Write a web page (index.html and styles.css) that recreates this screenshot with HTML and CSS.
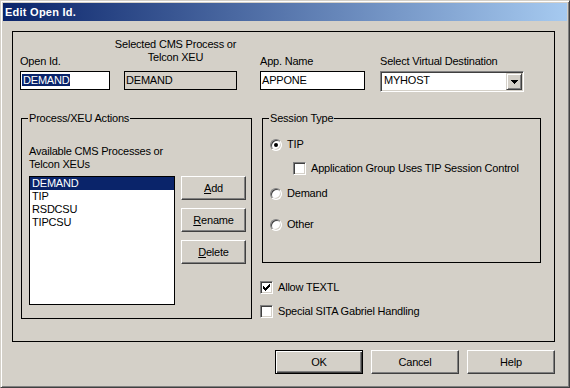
FILE: index.html
```html
<!DOCTYPE html>
<html lang="en">
<head>
    <meta charset="UTF-8">
    <title>Edit Open Id.</title>
    <link rel="stylesheet" href="styles.css">
</head>
<body>

    <div class="window">
        <div class="titlebar">Edit Open Id.</div>

        <div class="dialog">
            <div class="frame">

                <div class="top-row">
                    <div class="field">
                        <div class="field-label">Open Id.</div>
                        <div class="textbox open-id"><span class="selected-text">DEMAND</span></div>
                    </div>
                    <div class="field">
                        <div class="field-label two-line"><span>Selected CMS Process or<br>Telcon XEU</span></div>
                        <div class="textbox readonly">DEMAND</div>
                    </div>
                    <div class="field">
                        <div class="field-label">App. Name</div>
                        <div class="textbox app-name">APPONE</div>
                    </div>
                    <div class="field">
                        <div class="field-label">Select Virtual Destination</div>
                        <div class="select">
                            <span class="select-value">MYHOST</span>
                            <span class="select-button">
                                <svg width="7" height="4" viewBox="0 0 7 4" shape-rendering="crispEdges"><path d="M0 0h7v1h-1v1h-1v1h-1v1h-1v-1h-1v-1h-1v-1h-1z" fill="#000"/></svg>
                            </span>
                        </div>
                    </div>
                </div>

                <div class="middle-row">
                    <div class="group process-group">
                        <span class="group-title">Process/XEU Actions</span>
                        <div class="list-label">Available CMS Processes or<br>Telcon XEUs</div>
                        <div class="list-row">
                            <div class="listbox">
                                <div class="list-item selected">DEMAND</div>
                                <div class="list-item">TIP</div>
                                <div class="list-item">RSDCSU</div>
                                <div class="list-item">TIPCSU</div>
                            </div>
                            <div class="side-buttons">
                                <button class="btn side-btn"><u>A</u>dd</button>
                                <button class="btn side-btn"><u>R</u>ename</button>
                                <button class="btn side-btn"><u>D</u>elete</button>
                            </div>
                        </div>
                    </div>

                    <div class="right-col">
                        <div class="group session-group">
                            <span class="group-title">Session Type</span>
                            <div class="option option-tip"><span class="radio checked"></span>TIP</div>
                            <div class="option option-sub"><span class="checkbox"></span>Application Group Uses TIP Session Control</div>
                            <div class="option option-demand"><span class="radio"></span>Demand</div>
                            <div class="option option-other"><span class="radio"></span>Other</div>
                        </div>
                        <div class="option check-row first-check">
                            <span class="checkbox">
                                <svg width="7" height="7" viewBox="0 0 7 7" shape-rendering="crispEdges"><path d="M0 2h1v3h-1zM1 3h1v3h-1zM2 4h1v3h-1zM3 3h1v3h-1zM4 2h1v3h-1zM5 1h1v3h-1zM6 0h1v3h-1z" fill="#000"/></svg>
                            </span>Allow TEXTL
                        </div>
                        <div class="option check-row"><span class="checkbox"></span>Special SITA Gabriel Handling</div>
                    </div>
                </div>

            </div>

            <div class="button-row">
                <button class="btn dialog-btn default">OK</button>
                <button class="btn dialog-btn">Cancel</button>
                <button class="btn dialog-btn">Help</button>
            </div>
        </div>
    </div>

</body>
</html>
```

FILE: styles.css
```css
* {
    margin: 0;
    padding: 0;
    box-sizing: border-box;
}

body {
    background-color: #d4d0c8;
    font-family: "Liberation Sans", Arial, sans-serif;
    font-size: 11px;
    line-height: 13px;
    letter-spacing: -0.2px;
    color: #000;
}

.window {
    width: 570px;
    height: 388px;
    border: 1px solid;
    border-color: #d4d0c8 #404040 #404040 #d4d0c8;
    box-shadow: inset 1px 1px #fff, inset -1px -1px #808080;
    padding: 2px;
}

.titlebar {
    height: 18px;
    line-height: 18px;
    padding-left: 2px;
    background: linear-gradient(to right, #0a246a, #a6caf0);
    color: #fff;
    font-weight: bold;
    letter-spacing: 0.25px;
}

.dialog {
    padding: 10px 12px 0 9px;
}

.frame {
    border: 1px solid #000;
    height: 311px;
}

/* top row of fields */
.top-row {
    display: grid;
    grid-template-columns: 95px 145px 120px 144px;
    padding: 6px 0 0 7px;
}

.field-label {
    height: 33px;
    display: flex;
    flex-direction: column;
    justify-content: flex-end;
    padding-bottom: 3px;
    white-space: nowrap;
}

.field-label.two-line {
    width: 121px;
    align-items: center;
    text-align: center;
    padding-bottom: 7px;
}

.textbox {
    height: 19px;
    border: 1px solid #000;
    background: #fff;
    padding: 2px 0 0 1px;
    line-height: 12px;
    white-space: nowrap;
}

.open-id {
    width: 90px;
}

.readonly {
    width: 113px;
    margin-left: 9px;
    background: #d4d0c8;
    padding-left: 1px;
}

.app-name {
    width: 105px;
}

.selected-text {
    display: inline-block;
    background: #0a246a;
    color: #fff;
    padding: 0 1px;
}

.select {
    width: 144px;
    height: 21px;
    display: flex;
    background: #fff;
    border: 1px solid;
    border-color: #808080 #fff #fff #808080;
    box-shadow: inset 1px 1px #404040, inset -1px -1px #d4d0c8;
    padding: 1px;
}

.select-value {
    flex: 1;
    padding: 1px 0 0 2px;
}

.select-button {
    width: 16px;
    height: 17px;
    display: flex;
    align-items: center;
    justify-content: center;
    background: #d4d0c8;
    border: 1px solid;
    border-color: #d4d0c8 #404040 #404040 #d4d0c8;
    box-shadow: inset 1px 1px #fff, inset -1px -1px #808080;
}

/* group boxes */
.middle-row {
    display: flex;
    margin-top: 26px;
    padding-left: 8px;
}

.group {
    position: relative;
    border: 1px solid #000;
}

.group-title {
    position: absolute;
    top: -7px;
    left: 6px;
    padding: 0 1px;
    background: #d4d0c8;
}

.process-group {
    width: 231px;
    height: 201px;
    padding: 26px 0 0 7px;
}

.list-row {
    display: flex;
    margin-top: 5px;
}

.listbox {
    width: 146px;
    height: 129px;
    border: 1px solid #000;
    background: #fff;
}

.list-item {
    height: 13px;
    padding-left: 2px;
}

.list-item.selected {
    background: #0a246a;
    color: #fff;
}

.side-buttons {
    display: flex;
    flex-direction: column;
    gap: 8px;
    margin-left: 6px;
}

.btn {
    font: inherit;
    letter-spacing: inherit;
    color: #000;
    background: #d4d0c8;
    border: 1px solid;
    border-color: #fff #404040 #404040 #fff;
    box-shadow: inset -1px -1px #808080;
}

.side-btn {
    width: 65px;
    height: 24px;
}

.right-col {
    margin-left: 8px;
}

.session-group {
    width: 279px;
    height: 145px;
    margin-left: 2px;
    padding: 19px 0 0 7px;
}

.option {
    display: flex;
    align-items: center;
    gap: 5px;
    height: 13px;
    white-space: nowrap;
}

.option-sub {
    margin-top: 11px;
    padding-left: 23px;
}

.option-demand {
    margin-top: 12px;
}

.option-other {
    margin-top: 18px;
}

.radio {
    position: relative;
    flex: none;
    width: 12px;
    height: 12px;
    border-radius: 50%;
    background: #fff;
    border: 1px solid;
    border-color: #808080 #fff #fff #808080;
    box-shadow: inset 1px 1px #404040, inset -1px -1px #d4d0c8;
}

.radio.checked::after {
    content: "";
    position: absolute;
    left: 3px;
    top: 3px;
    width: 4px;
    height: 4px;
    border-radius: 50%;
    background: #000;
}

.checkbox {
    flex: none;
    display: flex;
    align-items: center;
    justify-content: center;
    width: 13px;
    height: 13px;
    background: #fff;
    border: 1px solid;
    border-color: #808080 #fff #fff #808080;
    box-shadow: inset 1px 1px #404040, inset -1px -1px #d4d0c8;
}

.check-row {
    margin-top: 11px;
}

.check-row.first-check {
    margin-top: 18px;
}

/* bottom buttons */
.button-row {
    display: flex;
    justify-content: flex-end;
    gap: 8px;
    margin-top: 8px;
}

.dialog-btn {
    width: 88px;
    height: 24px;
}

.dialog-btn.default {
    border-color: #000;
    box-shadow: inset 1px 1px #fff, inset -1px -1px #404040, inset -2px -2px #808080;
}
```
